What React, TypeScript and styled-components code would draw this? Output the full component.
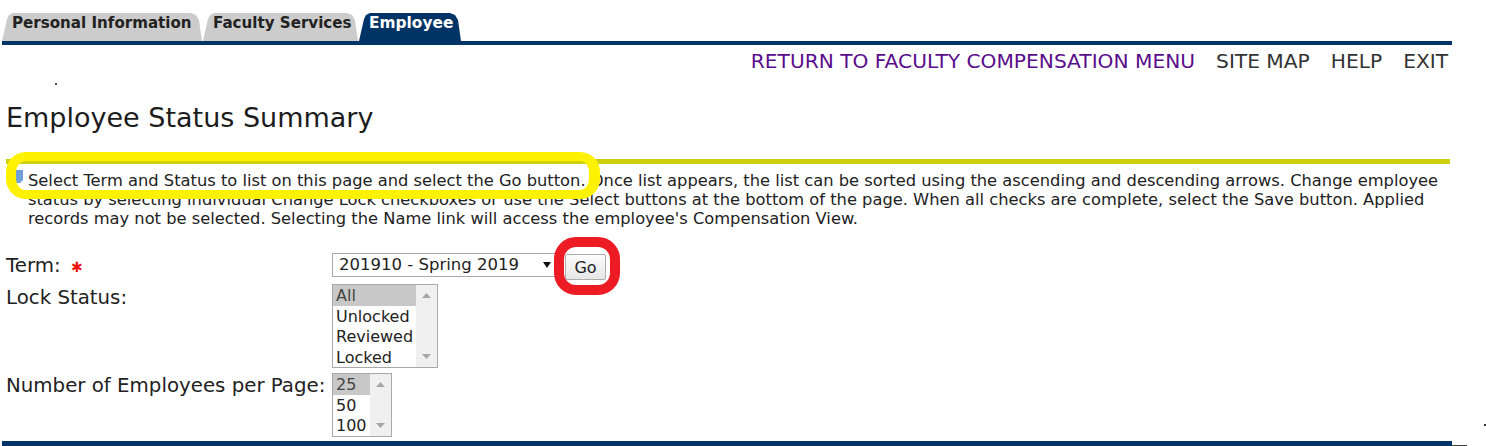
import React from "react";
import styled, { createGlobalStyle } from "styled-components";

const Global = createGlobalStyle`
  html, body { margin: 0; padding: 0; background: #fff; overflow: hidden; }
  body { font-family: "DejaVu Sans", Verdana, sans-serif; color: #222; }
`;

const Page = styled.div`
  position: relative;
  width: 1486px;
  height: 446px;
  overflow: hidden;
`;
const Tabs = styled.div`
  display: flex;
  padding: 13px 0 0 2px;
  height: 28px;
  width: 1450px;
`;
const Tab = styled.div<{ $active?: boolean; $w: number }>`
  width: ${(p) => p.$w}px;
  height: 28px;
  box-sizing: border-box;
  margin-right: 1px;
  padding: 2px 0 0 10px;
  font-size: ${(p) => (p.$active ? 15.4 : 15.1)}px;
  font-weight: 700;
  line-height: 17px;
  white-space: nowrap;
  background: ${(p) => (p.$active ? "#003366" : "#cccccc")};
  color: ${(p) => (p.$active ? "#fff" : "#222")};
  clip-path: polygon(0 100%, 5px 6px, 7px 2px, 11px 0, calc(100% - 11px) 0, calc(100% - 6px) 2px, calc(100% - 3px) 7px, 100% 100%);
`;
const TabBar = styled.div`
  height: 4px;
  width: 1450px;
  margin-left: 2px;
  background: #003366;
`;
const NavRow = styled.div`
  display: flex;
  justify-content: flex-end;
  gap: 21px;
  width: 1448px;
  padding-top: 5px;
  height: 27px;
  font-size: 20.2px;
  line-height: 23px;
  color: #333;
`;
const NavLink = styled.span<{ $visited?: boolean }>`
  color: ${(p) => (p.$visited ? "#5a0d8c" : "#333")};
`;
const Dot = styled.div`
  width: 2px;
  height: 2px;
  margin: 6px 0 0 55px;
  background: #111;
  border-radius: 50%;
`;
const Title = styled.h1`
  margin: 16px 0 0 6px;
  font-size: 27px;
  line-height: 34px;
  font-weight: 400;
  color: #1c1c1c;
`;
const Rule = styled.div`
  margin: 24px 0 0 6px;
  width: 1444px;
  height: 5px;
  background: #cfcf0e;
`;
const Info = styled.p`
  margin: 7px 0 0 28px;
  width: 1440px;
  font-size: 16.3px;
  line-height: 19px;
  color: #222;
`;
const InfoIcon = styled.svg`
  position: absolute;
  left: 14px;
  top: 170px;
  width: 10px;
  height: 14px;
`;
const Form = styled.div`
  margin: 25px 0 0 6px;
  display: grid;
  grid-template-columns: 326px auto;
  row-gap: 5px;
  font-size: 19.8px;
  line-height: 22px;
`;
const Label = styled.div<{ $top: number }>`
  padding-top: ${(p) => p.$top}px;
  color: #222;
  white-space: nowrap;
`;
const Star = styled.span`
  color: #ee1111;
  font-size: 14px;
  margin-left: 4px;
`;
const TermCell = styled.div`
  display: flex;
  align-items: flex-start;
  gap: 9px;
  height: 26px;
`;
const FakeSelect = styled.div`
  width: 224px;
  height: 24px;
  box-sizing: border-box;
  border: 1px solid #a9a9a9;
  display: flex;
  align-items: center;
  justify-content: space-between;
  padding: 0 4px 0 6px;
  font-size: 16.5px;
  color: #222;
`;
const Caret = styled.svg`
  width: 8px;
  height: 6px;
`;
const GoButton = styled.div`
  width: 41px;
  height: 26px;
  margin-top: 1px;
  box-sizing: border-box;
  border: 1px solid #adadad;
  border-radius: 2px;
  background: linear-gradient(#fcfcfc, #e6e6e6);
  font-size: 16px;
  line-height: 26px;
  text-align: center;
  color: #222;
`;
const ListBox = styled.div<{ $w: number; $h: number }>`
  width: ${(p) => p.$w}px;
  height: ${(p) => p.$h}px;
  box-sizing: border-box;
  border: 1px solid #a9a9a9;
  display: flex;
`;
const Options = styled.div`
  flex: 1;
  min-width: 0;
`;
const Option = styled.div<{ $sel?: boolean }>`
  height: 20.5px;
  line-height: 22.5px;
  padding-left: 3px;
  font-size: 16px;
  white-space: nowrap;
  color: ${(p) => (p.$sel ? "#444" : "#222")};
  background: ${(p) => (p.$sel ? "#c8c8c8" : "transparent")};
`;
const Scroll = styled.div`
  width: 21px;
  background: #f0f0f0;
  display: flex;
  flex-direction: column;
  justify-content: space-between;
  align-items: center;
  padding: 8px 0;
`;
const Arrow = styled.svg`
  width: 9px;
  height: 5px;
  display: block;
`;
const Footer = styled.div`
  position: absolute;
  left: 2px;
  top: 441px;
  width: 1450px;
  height: 5px;
  background: #003366;
  &::after {
    content: "";
    position: absolute;
    left: 100%;
    bottom: 0;
    width: 15px;
    height: 1px;
    background: #444;
  }
`;
const Speck = styled.div`
  position: absolute;
  left: 1484px;
  top: 424px;
  width: 2px;
  height: 2px;
  background: #333;
`;
const Ring = styled.div<{ $c: string; $w: number }>`
  position: absolute;
  box-sizing: border-box;
  border: ${(p) => p.$w}px solid ${(p) => p.$c};
`;
const YellowRing = styled(Ring)`
  left: 6px;
  top: 152px;
  width: 594px;
  height: 47px;
  border-width: 9px 11px 9px 10px;
  border-radius: 20px;
`;
const RedRing = styled(Ring)`
  left: 554px;
  top: 237px;
  width: 66px;
  height: 58px;
  border-radius: 22px;
`;

const Up = () => (
  <Arrow viewBox="0 0 9 5"><path d="M4.5 0L9 5H0z" fill="#a6a6a6" /></Arrow>
);
const Down = () => (
  <Arrow viewBox="0 0 9 5"><path d="M0 0h9L4.5 5z" fill="#a6a6a6" /></Arrow>
);

export default function App() {
  return (
    <Page>
      <Global />
      <Tabs>
        <Tab $w={200}>Personal Information</Tab>
        <Tab $w={155}>Faculty Services</Tab>
        <Tab $w={102} $active>Employee</Tab>
      </Tabs>
      <TabBar />
      <NavRow>
        <NavLink $visited>RETURN TO FACULTY COMPENSATION MENU</NavLink>
        <NavLink>SITE MAP</NavLink>
        <NavLink>HELP</NavLink>
        <NavLink>EXIT</NavLink>
      </NavRow>
      <Dot />
      <Title>Employee Status Summary</Title>
      <Rule />
      <InfoIcon viewBox="0 0 10 14">
        <path d="M1 0h8v10l-3 3H1z" fill="#6f9fd8" />
      </InfoIcon>
      <Info>
        Select Term and Status to list on this page and select the Go button. Once list appears, the list can be sorted using the ascending and descending arrows. Change employee status by selecting individual Change Lock checkboxes or use the Select buttons at the bottom of the page. When all checks are complete, select the Save button. Applied records may not be selected. Selecting the Name link will access the employee's Compensation View.
      </Info>
      <Form>
        <Label $top={2}>Term: <Star>✱</Star></Label>
        <TermCell>
          <FakeSelect>
            201910 - Spring 2019
            <Caret viewBox="0 0 8 6"><path d="M0 0h8L4 6z" fill="#111" /></Caret>
          </FakeSelect>
          <GoButton>Go</GoButton>
        </TermCell>
        <Label $top={3}>Lock Status:</Label>
        <ListBox $w={106} $h={84}>
          <Options>
            <Option $sel>All</Option>
            <Option>Unlocked</Option>
            <Option>Reviewed</Option>
            <Option>Locked</Option>
          </Options>
          <Scroll><Up /><Down /></Scroll>
        </ListBox>
        <Label $top={2}>Number of Employees per Page:</Label>
        <ListBox $w={60} $h={64}>
          <Options>
            <Option $sel>25</Option>
            <Option>50</Option>
            <Option>100</Option>
          </Options>
          <Scroll><Up /><Down /></Scroll>
        </ListBox>
      </Form>
      <Footer />
      <Speck />
      <YellowRing $c="#fff200" $w={10} />
      <RedRing $c="#ed1c24" $w={10} />
    </Page>
  );
}
